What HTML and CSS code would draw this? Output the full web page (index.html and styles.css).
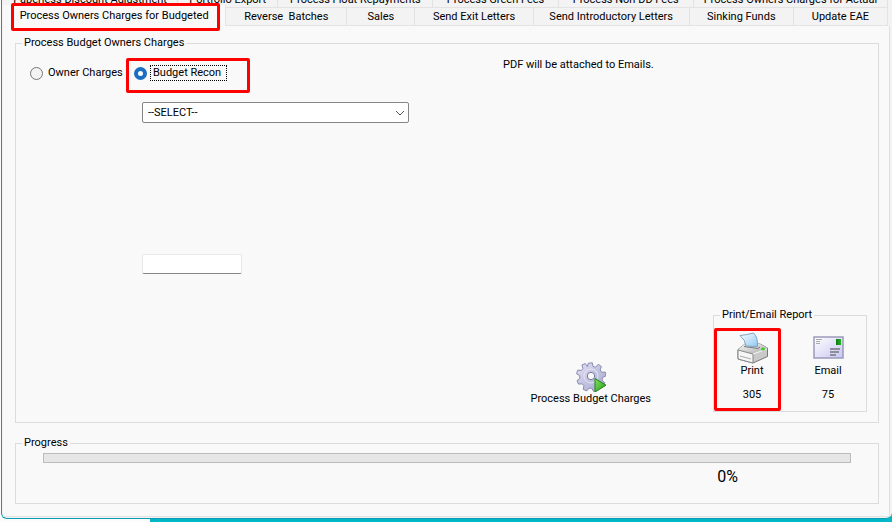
FILE: index.html
```html
<!DOCTYPE html>
<html lang="en">
<head>
  <meta charset="UTF-8" />
  <meta name="viewport" content="width=device-width, initial-scale=1.0"/>
  <title>Process Owners Charges for Budgeted</title>
  <link rel="stylesheet" href="styles.css">
</head>
<body>
  <div class="window">
    <div class="tabs tabs-top">
      <button class="tab">Paperless Discount Adjustment</button>
      <button class="tab">Portfolio Export</button>
      <button class="tab">Process Float Repayments</button>
      <button class="tab">Process Green Fees</button>
      <button class="tab">Process Non DD Fees</button>
      <button class="tab">Process Owners Charges for Actual</button>
    </div>
    <div class="tabs tabs-bottom">
      <button class="tab active">Process Owners Charges for Budgeted<span class="mark mark-tab"></span></button>
      <button class="tab">Reverse&nbsp; Batches</button>
      <button class="tab">Sales</button>
      <button class="tab">Send Exit Letters</button>
      <button class="tab">Send Introductory Letters</button>
      <button class="tab">Sinking Funds</button>
      <button class="tab">Update EAE</button>
    </div>

    <div class="panel">
      <fieldset class="charges">
        <legend>Process Budget Owners Charges</legend>
        <div class="options">
          <label class="option"><input type="radio" name="mode"><span>Owner Charges</span></label>
          <label class="option focused"><input type="radio" name="mode" checked><span>Budget Recon</span><span class="mark mark-option"></span></label>
          <p class="note">PDF will be attached to Emails.</p>
        </div>
        <div class="fields">
          <div class="select-box">
            <select aria-label="Budget">
              <option>--SELECT--</option>
            </select>
            <svg class="arrow" viewBox="0 0 10 6"><path d="M1 1l4 4 4-4" fill="none" stroke="#555"/></svg>
          </div>
          <input class="text-box" type="text" aria-label="Value">
        </div>
        <div class="actions">
          <button class="action process">
            <svg width="30" height="30" viewBox="0 0 30 30">
              <defs>
                <linearGradient id="gear" x1="0" y1="0" x2="1" y2="1">
                  <stop offset="0" stop-color="#e2e2f4"/>
                  <stop offset="1" stop-color="#a4a4cf"/>
                </linearGradient>
                <linearGradient id="play" x1="0" y1="0" x2="1" y2="1">
                  <stop offset="0" stop-color="#8be066"/>
                  <stop offset="1" stop-color="#1f9c16"/>
                </linearGradient>
              </defs>
              <path d="M12.3 1.2 16.3.8 17 4.4 19.6 5.2 22.2 2.3 25.4 4.5 24.1 8 25.8 10.2 29.4 10.2 29.8 14 26.5 15.5 26.1 18.2 28.8 20.8 27 24 23.2 23.2 21 25 21.3 28.5 17.6 29.4 15.8 26.3 13.1 26.2 10.7 28.9 7.2 27.3 8 23.8 6.1 21.8 2.5 22.1 1 18.6 3.9 16.4 3.7 13.6.5 11.8 1.8 8.1 5.4 8.5 7 6.4 5.9 3 9.2 1.5 11.4 4.6z" fill="url(#gear)" stroke="#8a8ab0" stroke-linejoin="round"/>
              <circle cx="15" cy="14" r="7" fill="none" stroke="#e6e6f6"/>
              <circle cx="15" cy="14" r="3.7" fill="#f9f9f9" stroke="#7878a0"/>
              <path d="M19 16.5V30l11-6.8z" fill="url(#play)" stroke="#178510" stroke-linejoin="round"/>
            </svg>
            Process Budget Charges
          </button>
          <fieldset class="report">
            <legend>Print/Email Report</legend>
            <div class="report-item">
              <button class="action">
                <svg width="32" height="32" viewBox="0 0 32 32">
                  <defs>
                    <linearGradient id="sheet" x1="0" y1="0" x2="1" y2="1">
                      <stop offset="0" stop-color="#fff"/>
                      <stop offset="1" stop-color="#8fc8f2"/>
                    </linearGradient>
                    <linearGradient id="lid" x1="0" y1="0" x2="1" y2="1">
                      <stop offset="0" stop-color="#fafafa"/>
                      <stop offset="1" stop-color="#aaa"/>
                    </linearGradient>
                  </defs>
                  <path d="M2 17.5 9 12h15l7.5 4v8.5L17 31 2 27z" fill="#c9c9c9" stroke="#777" stroke-linejoin="round"/>
                  <path d="M2 17.5 9 12h15l7.5 4L17 21.500z" fill="url(#lid)"/>
                  <path d="M2 18l15 4v9L2 27z" fill="#f6f6f6" stroke="#888" stroke-linejoin="round"/>
                  <path d="M4 24l11 3" stroke="#aaa"/>
                  <path d="M17 22l14-5" stroke="#f5f5f5"/>
                  <path d="M8 14.500l14 2 2-1.500" fill="none" stroke="#777"/>
                  <path d="M4 3.500Q10 3 17.500 1 22 5 21.500 14.500L10 14Q9.500 8 4 3.500z" fill="url(#sheet)" stroke="#7fa3c0"/>
                  <ellipse cx="27" cy="17" rx="2" ry="1.500" fill="#3ecb2c"/>
                </svg>
                Print
              </button>
              <span class="count">305</span>
              <span class="mark mark-print"></span>
            </div>
            <div class="report-item">
              <button class="action">
                <svg width="32" height="32" viewBox="0 0 32 32">
                  <defs>
                    <linearGradient id="mail" x1="0" y1="0" x2="1" y2="1">
                      <stop offset="0" stop-color="#fff"/>
                      <stop offset="1" stop-color="#c6c6f2"/>
                    </linearGradient>
                    <linearGradient id="stamp" x1="0" y1="0" x2="1" y2="0">
                      <stop offset="0" stop-color="#0a7d0a"/>
                      <stop offset="1" stop-color="#22b422"/>
                    </linearGradient>
                  </defs>
                  <rect x="2" y="5" width="29" height="21" fill="url(#mail)" stroke="#9a9abc" stroke-width="1.500"/>
                  <path d="M4 7.500h6M4 9.500h4M4 11.500h4" stroke="#aaa"/>
                  <rect x="24" y="7" width="5" height="6" fill="url(#stamp)"/>
                  <path d="M18 17h10M18 20h9M18 23h6" stroke="#8c8c9c" stroke-width="2"/>
                </svg>
                Email
              </button>
              <span class="count">75</span>
            </div>
          </fieldset>
        </div>
      </fieldset>

      <fieldset class="progress-group">
        <legend>Progress</legend>
        <progress value="0" max="100" aria-label="Progress"></progress>
        <output class="percent">0%</output>
      </fieldset>
    </div>
  </div>
  <div class="strip"></div>
</body>
</html>
```

FILE: styles.css
```css
* {
  box-sizing: border-box;
}

body {
  margin: 0;
  background: #fcfcfc;
  color: #000;
  font-family: Roboto, "Liberation Sans", sans-serif;
  font-size: 11px;
  line-height: 14px;
}

button, input, select {
  font: inherit;
  color: inherit;
}

.window {
  position: relative;
  z-index: 1;
  margin-left: 1px;
  padding: 0 2px 1px 1px;
  background: #f3f3f3;
  border-left: 1px solid #0a9ab4;
  border-bottom: 1px solid #0a9ab4;
  border-radius: 0 0 6px 6px;
  overflow: hidden;
}

.tabs {
  display: grid;
  padding-right: 2px;
}

.tabs-top {
  grid-template-columns: 175fr 100fr 155fr 125fr 135fr 194fr;
  height: 8px;
  align-content: end;
}

.tabs-bottom {
  grid-template-columns: 223fr 121fr 68fr 118fr 156fr 104fr 94fr;
  height: 18px;
}

.tab {
  padding: 0;
  background: #f3f3f3;
  border: 0 solid #e3e3e3;
  border-width: 0 1px 1px 0;
  white-space: nowrap;
}

.tabs-top .tab {
  height: 16px;
}

.tab.active {
  position: relative;
  margin-top: -3px;
  background: #f9f9f9;
  border-bottom: 0;
}

.panel {
  padding: 10px 10px 12px 12px;
  background: #f9f9f9;
  border-right: 1px solid #dfdfdf;
  border-bottom: 1px solid #e3e3e3;
}

fieldset {
  min-width: 0;
  margin: 0;
  padding: 0;
  border: 1px solid #dcdcdc;
}

legend {
  margin-left: 6px;
  padding: 0 2px;
}

.charges {
  margin-bottom: 13px;
}

.options {
  display: flex;
  align-items: flex-start;
  padding: 8px 0 0 14px;
}

.option {
  position: relative;
  display: flex;
  align-items: center;
  height: 16px;
  margin-top: 7px;
  gap: 5px;
  width: 104px;
}

.option input {
  appearance: none;
  width: 13px;
  height: 13px;
  margin: 0;
  background: #f3f3f3;
  border: 1px solid #767676;
  border-radius: 50%;
}

.option input:checked {
  background: #fff;
  border: 4px solid #1a6fc0;
}

.option.focused {
  gap: 3px;
}

.focused span:nth-child(2) {
  padding: 0 5px 0 2px;
  border: 1px dotted #000;
}

.note {
  margin: 0 0 0 265px;
}

.fields {
  display: flex;
  flex-direction: column;
  gap: 131px;
  padding: 21px 0 0 126px;
}

.select-box {
  position: relative;
  width: 267px;
}

select {
  display: block;
  appearance: none;
  width: 100%;
  height: 21px;
  padding: 0 5px;
  background: #fff;
  border: 1px solid #858585;
  border-radius: 2px;
}

.arrow {
  position: absolute;
  right: 4px;
  top: 8px;
  width: 10px;
  height: 6px;
}

.text-box {
  width: 100px;
  height: 20px;
  background: #fff;
  border: 1px solid #e8e8e8;
  border-bottom-color: #858585;
  border-radius: 2px;
}

.actions {
  display: flex;
  justify-content: flex-end;
  align-items: flex-end;
  gap: 62px;
  padding: 34px 11px 10px;
}

.action {
  display: flex;
  flex-direction: column;
  align-items: center;
  padding: 0;
  background: none;
  border: 0;
  white-space: nowrap;
}

.process {
  margin-bottom: 6px;
}

.report {
  display: grid;
  grid-template-columns: 1fr 1fr;
  width: 154px;
}

.report-item {
  position: relative;
  display: flex;
  flex-direction: column;
  align-items: center;
  gap: 10px;
  padding: 10px 0 9px;
}

/* red highlight boxes */
.mark {
  position: absolute;
  border: 3px solid #f00;
  border-radius: 2px;
  pointer-events: none;
}

.mark-tab {
  inset: -2px 5px -5px 8px;
}

.mark-option {
  inset: -7px -12px -12px -8px;
}

.mark-print {
  inset: 6px 9px 0 0;
}

progress {
  display: block;
  appearance: none;
  width: calc(100% - 54px);
  height: 10px;
  margin: 3px 0 0 27px;
  border: 1px solid #bcbcbc;
  background: #e6e6e6;
}

progress::-webkit-progress-bar {
  background: #e6e6e6;
}

progress::-webkit-progress-value {
  background: #06b025;
}

.percent {
  display: block;
  margin-right: 140px;
  padding: 5px 0 17px;
  font-size: 16px;
  line-height: 18px;
  text-align: right;
}

.strip {
  height: 11px;
  margin: -8px 0 0 150px;
  background: #00b7c6;
}
```
